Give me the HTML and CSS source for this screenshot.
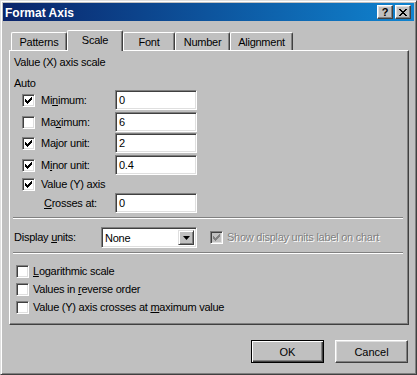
FILE: index.html
```html
<!DOCTYPE html>
<html lang="en">
<head>
  <meta charset="UTF-8" />
  <title>Format Axis</title>
  <link rel="stylesheet" href="styles.css">
</head>
<body>
  <div class="dialog">
    <div class="titlebar">
      <span class="title">Format Axis</span>
      <span class="capbtn help">?</span>
      <span class="capbtn close">
        <svg width="8" height="7" viewBox="0 0 8 7"><path d="M0 0h2v1h1v1h2v-1h1v-1h2v1h-1v1h-1v1h-1v1h1v1h1v1h1v1h-2v-1h-1v-1h-2v1h-1v1h-2v-1h1v-1h1v-1h1v-1h-1v-1h-1v-1h-1z" fill="#000"/></svg>
      </span>
    </div>

    <div class="tabs">
      <div class="tab t-patterns">Patterns</div>
      <div class="tab t-scale active">Scale</div>
      <div class="tab t-font">Font</div>
      <div class="tab t-number">Number</div>
      <div class="tab t-align">Alignment</div>
    </div>

    <div class="panel">
      <div class="heading">Value (X) axis scale</div>
      <div class="auto">Auto</div>

      <div class="row wide">
        <span class="check on"></span>
        <span class="label">Mi<u>n</u>imum:</span>
        <span class="field">0</span>
      </div>
      <div class="row">
        <span class="check"></span>
        <span class="label">Ma<u>x</u>imum:</span>
        <span class="field">6</span>
      </div>
      <div class="row wide">
        <span class="check on"></span>
        <span class="label">Ma<u>j</u>or unit:</span>
        <span class="field">2</span>
      </div>
      <div class="row">
        <span class="check on"></span>
        <span class="label">M<u>i</u>nor unit:</span>
        <span class="field">0.4</span>
      </div>
      <div class="row short">
        <span class="check on"></span>
        <span class="label">Value (Y) axis</span>
      </div>
      <div class="row crosses">
        <span class="label"><u>C</u>rosses at:</span>
        <span class="field">0</span>
      </div>

      <div class="sep"></div>

      <div class="units">
        <span class="units-label">Display <u>u</u>nits:</span>
        <span class="select">
          <span class="select-text">None</span>
          <span class="drop">
            <svg width="7" height="4" viewBox="0 0 7 4"><path d="M0 0h7l-3.5 4z" fill="#000"/></svg>
          </span>
        </span>
        <span class="check on disabled"></span>
        <span class="disabled-text">Show display units label on chart</span>
      </div>

      <div class="sep"></div>

      <div class="opts">
        <div class="opt"><span class="check"></span><span><u>L</u>ogarithmic scale</span></div>
        <div class="opt"><span class="check"></span><span>Values in <u>r</u>everse order</span></div>
        <div class="opt"><span class="check"></span><span>Value (Y) axis crosses at <u>m</u>aximum value</span></div>
      </div>
    </div>

    <div class="buttons">
      <button class="btn default">OK</button>
      <button class="btn">Cancel</button>
    </div>
  </div>
</body>
</html>
```

FILE: styles.css
```css
body {
  margin: 0;
  font-family: "Liberation Sans", Arial, sans-serif;
  font-size: 11px;
  letter-spacing: -0.25px;
  color: #000;
  background: #c0c0c0;
}
.dialog {
  width: 417px;
  height: 375px;
  box-sizing: border-box;
  background: #c0c0c0;
  border: 1px solid;
  border-color: #dfdfdf #404040 #404040 #dfdfdf;
  box-shadow: inset 1px 1px #fff, inset -1px -1px #808080;
  padding: 2px;
  display: flex;
  flex-direction: column;
}

/* title bar */
.titlebar {
  height: 18px;
  display: flex;
  align-items: center;
  padding: 0 3px 0 2px;
  background: linear-gradient(to right, #0a246a, #1084d0);
}
.title {
  flex: 1;
  color: #fff;
  font-weight: bold;
  font-size: 12px;
  letter-spacing: 0;
  padding-top: 1px;
}
.capbtn {
  width: 16px;
  height: 14px;
  box-sizing: border-box;
  background: #c0c0c0;
  border: 1px solid;
  border-color: #fff #404040 #404040 #fff;
  box-shadow: inset -1px -1px #808080, inset 1px 1px #dfdfdf;
  display: flex;
  align-items: center;
  justify-content: center;
}
.help {
  font-weight: bold;
  font-size: 11px;
  line-height: 12px;
  margin-right: 2px;
}

/* tabs */
.tabs {
  display: flex;
  align-items: flex-end;
  margin-top: 9px;
  padding-left: 8px;
  height: 20px;
}
.tab {
  height: 18px;
  box-sizing: border-box;
  border-top: 1px solid #fff;
  border-left: 1px solid #fff;
  border-right: 1px solid #404040;
  box-shadow: inset -1px 0 #808080;
  border-radius: 2px 2px 0 0;
  padding-top: 3px;
  text-align: center;
}
.t-patterns { width: 56px; }
.t-scale { width: 56px; }
.t-font { width: 52px; }
.t-number { width: 55px; }
.t-align { width: 63px; }
.tab.active {
  height: 21px;
  margin-bottom: -1px;
  background: #c0c0c0;
  position: relative;
  z-index: 1;
  padding-top: 3px;
}

/* panel */
.panel {
  height: 275px;
  box-sizing: border-box;
  margin: 0 5px 0 6px;
  border: 1px solid;
  border-color: #fff #404040 #404040 #fff;
  box-shadow: inset -1px -1px #808080;
  padding: 5px 5px 0 4px;
  line-height: 13px;
}
.heading {
  margin-bottom: 8px;
}
.auto {
  height: 13px;
}
.row {
  display: flex;
  align-items: center;
  height: 20px;
  margin-bottom: 1px;
  padding-left: 8px;
}
.row.wide {
  margin-bottom: 2px;
}
.row .label {
  width: 74px;
  margin-left: 6px;
}
.row.short {
  height: 16px;
  margin-bottom: 1px;
}
.row.crosses {
  padding-left: 30px;
  margin-bottom: 0;
}
.row.crosses .label {
  margin-left: 0;
  width: 71px;
}
.field {
  width: 82px;
  height: 20px;
  box-sizing: border-box;
  background: #fff;
  border: 1px solid;
  border-color: #808080 #fff #fff #808080;
  box-shadow: inset 1px 1px #404040, inset -1px -1px #dfdfdf;
  padding: 3px 0 0 3px;
}
.check {
  width: 13px;
  height: 13px;
  flex: none;
  box-sizing: border-box;
  background: #fff;
  border: 1px solid;
  border-color: #808080 #fff #fff #808080;
  box-shadow: inset 1px 1px #404040, inset -1px -1px #dfdfdf;
}
.check.on {
  background: #fff url("data:image/svg+xml,%3Csvg xmlns='http://www.w3.org/2000/svg' width='7' height='7'%3E%3Cpath d='M6 0h1v1h-1zM5 1h2v1h-2zM0 2h1v1h-1zM4 2h3v1h-3zM0 3h2v1h-2zM3 3h3v1h-3zM0 4h5v1h-5zM1 5h3v1h-3zM2 6h1v1h-1z'/%3E%3C/svg%3E") no-repeat 2px 2px;
}
.check.on.disabled {
  background: #c0c0c0 url("data:image/svg+xml,%3Csvg xmlns='http://www.w3.org/2000/svg' width='7' height='7'%3E%3Cpath fill='%23808080' d='M6 0h1v1h-1zM5 1h2v1h-2zM0 2h1v1h-1zM4 2h3v1h-3zM0 3h2v1h-2zM3 3h3v1h-3zM0 4h5v1h-5zM1 5h3v1h-3zM2 6h1v1h-1z'/%3E%3C/svg%3E") no-repeat 2px 2px;
}
.sep {
  height: 0;
  border-top: 1px solid #808080;
  border-bottom: 1px solid #fff;
  margin: 4px 0 0 -1px;
}

/* display units */
.units {
  display: flex;
  align-items: center;
  height: 21px;
  margin-top: 8px;
}
.units-label {
  width: 87px;
}
.select {
  width: 96px;
  height: 21px;
  box-sizing: border-box;
  background: #fff;
  border: 1px solid;
  border-color: #808080 #fff #fff #808080;
  box-shadow: inset 1px 1px #404040, inset -1px -1px #dfdfdf;
  display: flex;
  padding: 2px;
}
.select-text {
  flex: 1;
  padding: 2px 0 0 1px;
}
.drop {
  width: 16px;
  height: 15px;
  box-sizing: border-box;
  background: #c0c0c0;
  border: 1px solid;
  border-color: #dfdfdf #404040 #404040 #dfdfdf;
  box-shadow: inset 1px 1px #fff, inset -1px -1px #808080;
  display: flex;
  align-items: center;
  justify-content: center;
}
.units .check {
  margin: 0 4px 0 13px;
}
.disabled-text {
  color: #808080;
  text-shadow: 1px 1px #fff;
}
.units + .sep {
  margin-top: 4px;
}

/* options */
.opts {
  margin-top: 8px;
  padding-left: 2px;
}
.opt {
  display: flex;
  align-items: center;
  height: 18px;
}
.opt .check {
  margin-right: 4px;
}

/* buttons */
.buttons {
  display: flex;
  justify-content: flex-end;
  gap: 11px;
  margin: 15px 6px 0 0;
}
.btn {
  width: 73px;
  height: 23px;
  box-sizing: border-box;
  font: inherit;
  font-size: 11px;
  color: #000;
  background: #c0c0c0;
  border: 1px solid;
  border-color: #fff #404040 #404040 #fff;
  box-shadow: inset -1px -1px #808080, inset 1px 1px #dfdfdf;
  padding: 0;
}
.btn.default {
  border: 1px solid #000;
  box-shadow: inset 1px 1px #fff, inset -1px -1px #404040, inset -2px -2px #808080;
}
```
